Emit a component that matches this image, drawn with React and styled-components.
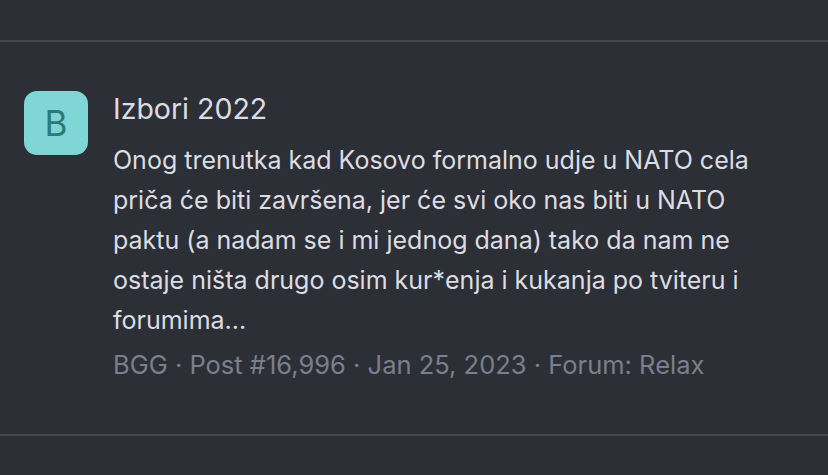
import React from 'react';
import styled, { createGlobalStyle } from 'styled-components';

const GlobalStyle = createGlobalStyle`
  html, body {
    margin: 0;
    background: #2d2f36;
  }
  body {
    font-family: Inter, "Noto Sans", "Liberation Sans", sans-serif;
    -webkit-font-smoothing: antialiased;
  }
`;

const Page = styled.div`
  width: 828px;
  height: 475px;
  background: #2d2f36;
  padding-top: 40px;
  box-sizing: border-box;
`;

const Divider = styled.div`
  height: 2px;
  background: #45474e;
`;

const Post = styled.div`
  display: flex;
  gap: 25px;
  padding: 49px 24px 52px 24px;
  height: 392px;
  box-sizing: border-box;
`;

const Avatar = styled.div`
  flex: none;
  width: 64px;
  height: 64px;
  border-radius: 13px;
  background: #80d5d5;
  color: #2b7a78;
  font-size: 35px;
  display: flex;
  align-items: center;
  justify-content: center;
`;

const Body = styled.div`
  flex: 1;
  min-width: 0;
`;

const Title = styled.div`
  color: #dcdde3;
  font-size: 28.5px;
  line-height: 36px;
  margin-bottom: 13px;
`;

const Text = styled.p`
  margin: 0;
  color: #dcdde3;
  font-size: 25px;
  line-height: 40px;
  padding-right: 8px;
`;

const Meta = styled.div`
  margin-top: 9px;
  color: #7b7f8d;
  font-size: 25.5px;
  line-height: 32px;
`;

export default function App() {
  return (
    <Page>
      <GlobalStyle />
      <Divider />
      <Post>
        <Avatar>B</Avatar>
        <Body>
          <Title>Izbori 2022</Title>
          <Text>
            Onog trenutka kad Kosovo formalno udje u NATO cela priča će biti završena, jer će svi oko nas biti u NATO paktu (a nadam se i mi jednog dana) tako da nam ne ostaje ništa drugo osim kur*enja i kukanja po tviteru i forumima...
          </Text>
          <Meta>BGG · Post #16,996 · Jan 25, 2023 · Forum: Relax</Meta>
        </Body>
      </Post>
      <Divider />
    </Page>
  );
}
